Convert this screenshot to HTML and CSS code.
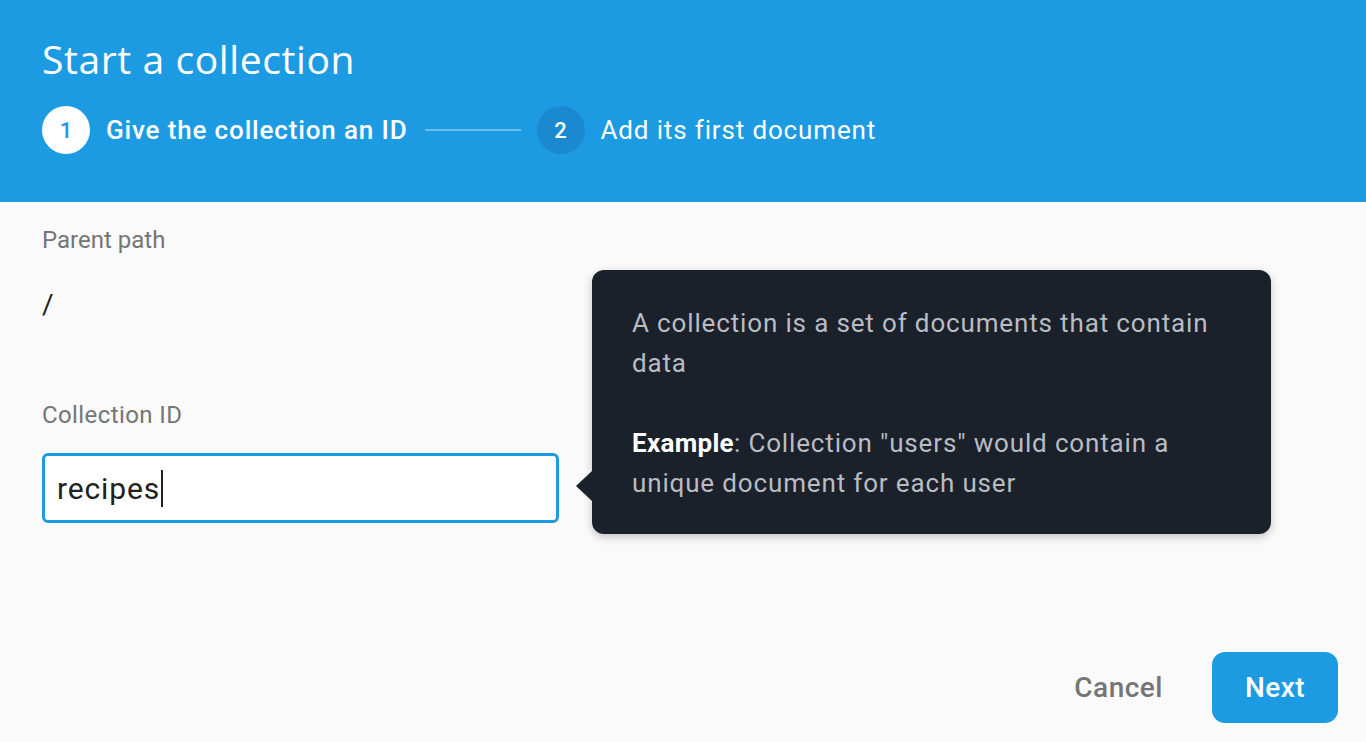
FILE: index.html
```html
<!DOCTYPE html>
<html>
<head>
<meta charset="utf-8">
<link rel="stylesheet" href="styles.css">
</head>
<body>
<div class="dialog">
  <header class="header">
    <h1 class="title">Start a collection</h1>
    <div class="steps">
      <div class="step active">
        <span class="num">1</span>
        <span class="label">Give the collection an ID</span>
      </div>
      <span class="connector"></span>
      <div class="step">
        <span class="num">2</span>
        <span class="label">Add its first document</span>
      </div>
    </div>
  </header>
  <main class="content">
    <div class="fields">
      <div class="field-label">Parent path</div>
      <div class="path">/</div>
      <div class="field-label second">Collection ID</div>
      <div class="input-row">
        <div class="input"><span class="value">recipes</span><span class="caret"></span></div>
        <div class="tooltip">
          <p>A collection is a set of documents that contain data</p>
          <p><strong>Example</strong>: Collection "users" would contain a unique document for each user</p>
        </div>
      </div>
    </div>
    <div class="actions">
      <button class="btn cancel">Cancel</button>
      <button class="btn next">Next</button>
    </div>
  </main>
</div>
</body>
</html>
```
FILE: styles.css
```css
* { box-sizing: border-box; }
html, body { margin: 0; padding: 0; }
body {
  width: 1366px;
  height: 742px;
  overflow: hidden;
  background: #fafafa;
  font-family: Roboto, "Noto Sans", sans-serif;
}
.dialog { display: flex; flex-direction: column; height: 742px; }
.header {
  background: #1d9be2;
  height: 202px;
  padding: 36px 42px 0;
  color: #fff;
}
.title {
  margin: 0;
  font-family: "Open Sans", Roboto, sans-serif;
  font-weight: 400;
  font-size: 39px;
  line-height: 46px;
  letter-spacing: 0.6px;
}
.steps {
  display: flex;
  align-items: center;
  margin-top: 24px;
  height: 48px;
}
.step { display: flex; align-items: center; }
.num {
  width: 48px;
  height: 48px;
  border-radius: 50%;
  background: #1a89d0;
  color: #fff;
  display: flex;
  align-items: center;
  justify-content: center;
  font-size: 22px;
  font-weight: 500;
}
.step.active .num { background: #fff; color: #1d9be2; }
.label {
  margin-left: 16px;
  font-size: 26px;
  letter-spacing: 0.85px;
  font-weight: 400;
}
.step.active .label { font-weight: 500; }
.connector {
  width: 96px;
  height: 2px;
  background: #6fbfee;
  margin: 0 16px 0 17px;
}
.content {
  flex: 1;
  display: flex;
  flex-direction: column;
  padding: 0 42px;
}
.fields { flex: 1; }
.field-label {
  margin-top: 24px;
  font-size: 24px;
  line-height: 28px;
  color: #757575;
}
.field-label.second { margin-top: 80px; letter-spacing: 0.4px; }
.path {
  margin-top: 35px;
  font-size: 28px;
  line-height: 32px;
  color: #212121;
}
.input-row {
  position: relative;
  margin-top: 24px;
}
.input {
  width: 517px;
  height: 70px;
  background: #fff;
  border: 3px solid #1d9be2;
  border-radius: 6px;
  display: flex;
  align-items: center;
  padding-left: 12px;
  font-size: 30px;
  letter-spacing: 0.85px;
  color: #212121;
}
.caret {
  display: inline-block;
  width: 2px;
  height: 37px;
  background: #212121;
  margin-left: 1px;
}
.tooltip {
  position: absolute;
  left: 550px;
  top: -183px;
  width: 679px;
  background: #1b212b;
  border-radius: 12px;
  padding: 33px 40px 31px;
  color: #b9bcc2;
  font-size: 26px;
  letter-spacing: 0.85px;
  line-height: 40px;
  box-shadow: 0 3px 10px rgba(0,0,0,0.22);
}
.tooltip::before {
  content: "";
  position: absolute;
  left: -16px;
  top: 201px;
  border-top: 15px solid transparent;
  border-bottom: 15px solid transparent;
  border-right: 16px solid #1b212b;
}
.tooltip p { margin: 0; }
.tooltip p + p { margin-top: 40px; }
.tooltip strong { color: #fff; font-weight: 700; letter-spacing: 0.3px; }
.actions {
  display: flex;
  justify-content: flex-end;
  align-items: center;
  padding-bottom: 19px;
  margin-right: -14px;
}
.btn {
  font-family: Roboto, sans-serif;
  font-size: 28px;
  font-weight: 500;
  border: none;
  border-radius: 13px;
  height: 71px;
  cursor: pointer;
}
.cancel {
  background: transparent;
  color: #757575;
  letter-spacing: 0.5px;
  padding: 0 16px;
  margin-right: 33px;
}
.next {
  background: #1d9be2;
  color: #fff;
  letter-spacing: 0.4px;
  width: 126px;
}
```
